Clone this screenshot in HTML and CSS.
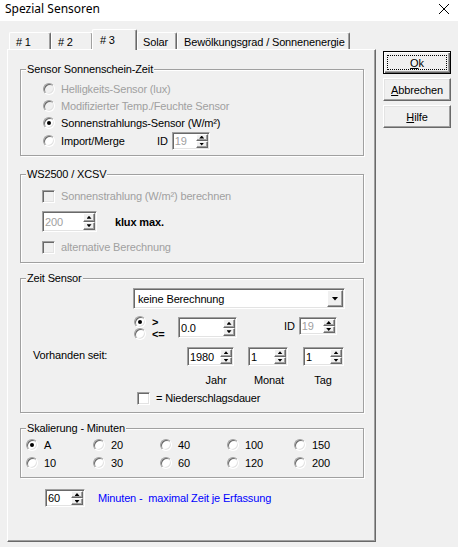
FILE: index.html
```html
<!DOCTYPE html>
<html>
	<head>
		<meta charset="UTF-8">
		<title>Spezial Sensoren</title>
		<link rel="stylesheet" href="styles.css">
	</head>
	<body>
		<div class="titlebar">
			<span class="caption">Spezial Sensoren</span>
			<svg class="close" width="12" height="12" viewBox="0 0 12 12"><path d="M1 1L11 11M11 1L1 11" stroke="#000" stroke-width="1" fill="none"/></svg>
		</div>
		<div class="dialog">
			<div class="tabarea">
				<div class="tabs">
					<div class="tab t1"># 1</div>
					<div class="tab t2"># 2</div>
					<div class="tab active"># 3</div>
					<div class="tab t4">Solar</div>
					<div class="tab t5">Bewölkungsgrad / Sonnenenergie</div>
				</div>
				<div class="panel">
					<!-- Sensor Sonnenschein-Zeit -->
					<div class="group g1">
						<div class="gtitle">Sensor Sonnenschein-Zeit</div>
						<div class="gbody">
							<div class="row off"><span class="radio dis"></span>Helligkeits-Sensor (lux)</div>
							<div class="row off"><span class="radio dis"></span>Modifizierter Temp./Feuchte Sensor</div>
							<div class="row"><span class="radio on"></span>Sonnenstrahlungs-Sensor (W/m²)</div>
							<div class="row r4">
								<span class="radio"></span><span class="lbl-import">Import/Merge</span>
								<span class="idlbl">ID</span>
								<div class="spin s-id1"><span class="val off">19</span><span class="arrows"><i class="up"></i><i class="dn"></i></span></div>
							</div>
						</div>
					</div>
					<!-- WS2500 -->
					<div class="group g2">
						<div class="gtitle">WS2500 / XCSV</div>
						<div class="gbody">
							<div class="row off"><span class="check dis"></span>Sonnenstrahlung (W/m²) berechnen</div>
							<div class="row r-spin">
								<div class="spin s-200"><span class="val off">200</span><span class="arrows"><i class="up"></i><i class="dn"></i></span></div>
								<b class="klux">klux max.</b>
							</div>
							<div class="row off r-alt"><span class="check dis"></span>alternative Berechnung</div>
						</div>
					</div>
					<!-- Zeit Sensor -->
					<div class="group g3">
						<div class="gtitle">Zeit Sensor</div>
						<div class="gbody">
							<div class="combo"><span class="val">keine Berechnung</span><span class="dropbtn"><i></i></span></div>
							<div class="row z-cmp">
								<div class="cmp">
									<div class="cmprow"><span class="radio on"></span><b>&gt;</b></div>
									<div class="cmprow"><span class="radio"></span><b>&lt;=</b></div>
								</div>
								<div class="spin s-val"><span class="val">0.0</span><span class="arrows"><i class="up"></i><i class="dn"></i></span></div>
								<span class="idlbl2">ID</span>
								<div class="spin s-id2"><span class="val off">19</span><span class="arrows"><i class="up"></i><i class="dn"></i></span></div>
							</div>
							<div class="row z-date">
								<span class="since">Vorhanden seit:</span>
								<div class="spin s-year"><span class="val">1980</span><span class="arrows"><i class="up"></i><i class="dn"></i></span></div>
								<div class="spin s-month"><span class="val">1</span><span class="arrows"><i class="up"></i><i class="dn"></i></span></div>
								<div class="spin s-day"><span class="val">1</span><span class="arrows"><i class="up"></i><i class="dn"></i></span></div>
							</div>
							<div class="row z-labels">
								<span class="dl dl-year">Jahr</span>
								<span class="dl dl-month">Monat</span>
								<span class="dl dl-day">Tag</span>
							</div>
							<div class="row z-rain"><span class="check"></span>= Niederschlagsdauer</div>
						</div>
					</div>
					<!-- Skalierung -->
					<div class="group g4">
						<div class="gtitle">Skalierung - Minuten</div>
						<div class="scale">
							<div class="opt"><span class="radio on"></span>A</div>
							<div class="opt"><span class="radio"></span>20</div>
							<div class="opt"><span class="radio"></span>40</div>
							<div class="opt"><span class="radio"></span>100</div>
							<div class="opt"><span class="radio"></span>150</div>
							<div class="opt"><span class="radio"></span>10</div>
							<div class="opt"><span class="radio"></span>30</div>
							<div class="opt"><span class="radio"></span>60</div>
							<div class="opt"><span class="radio"></span>120</div>
							<div class="opt"><span class="radio"></span>200</div>
						</div>
					</div>
					<div class="row maxrow">
						<div class="spin s-60"><span class="val">60</span><span class="arrows"><i class="up"></i><i class="dn"></i></span></div>
						<span class="blue">Minuten -&nbsp; maximal Zeit je Erfassung</span>
					</div>
				</div>
			</div>
			<div class="buttons">
				<div class="btn default"><span class="focus"><u>O</u>k</span></div>
				<div class="btn"><u>A</u>bbrechen</div>
				<div class="btn"><u>H</u>ilfe</div>
			</div>
		</div>
	</body>
</html>
```

FILE: styles.css
```css
body{
	margin: 0;
	width: 458px;
	height: 547px;
	overflow: hidden;
	background: #f0f0f0;
	color: #000;
	font: 11px "Liberation Sans", Arial, sans-serif;
	letter-spacing: -0.15px;
}
.titlebar{
	height: 21px;
	background: #fff;
	display: flex;
	justify-content: space-between;
	align-items: flex-start;
	padding: 0 8px 0 5px;
}
.caption{
	font: 12px/18px "Noto Sans", sans-serif;
	letter-spacing: 0;
}
.close{
	margin-top: 3px;
}
.dialog{
	display: flex;
	padding: 8px 0 0 7px;
}
.tabarea{
	width: 369px;
}

/* tabs */
.tabs{
	display: flex;
	align-items: flex-end;
	height: 20px;
	padding-left: 2px;
}
.tab{
	box-sizing: border-box;
	height: 17px;
	border: 1px solid;
	border-bottom: 0;
	border-color: #fff #696969 #fff #fff;
	border-radius: 2px 2px 0 0;
	box-shadow: inset -1px 0 #a0a0a0;
	padding: 3px 0 0 6px;
	line-height: 13px;
	white-space: nowrap;
}
.t1{ width: 42px; }
.t2{ width: 42px; }
.t4{ width: 40px; padding-left: 5px; }
.t5{ width: 173px; }
.tab.active{
	width: 45px;
	height: 21px;
	margin: 0 0 -1px -1px;
	padding: 4px 0 0 7px;
	position: relative;
	z-index: 1;
	background: #f0f0f0;
}
.panel{
	box-sizing: border-box;
	height: 493px;
	border: 1px solid;
	border-color: #fff #696969 #696969 #fff;
	box-shadow: inset -1px -1px #a0a0a0;
	padding-left: 12px;
}

/* group boxes */
.group{
	box-sizing: border-box;
	width: 344px;
	border: 1px solid #a0a0a0;
	box-shadow: inset 1px 1px #fff, 1px 1px #fff;
}
.gtitle{
	display: table;
	margin: -7px 0 0 5px;
	padding: 0 1px;
	line-height: 13px;
	background: #f0f0f0;
}
.row{
	display: flex;
	align-items: center;
	height: 17px;
	white-space: nowrap;
}
.off{
	color: #a0a0a0;
}
.g1{ margin-top: 19px; }
.g1 .gbody{ padding: 4px 0 5px 22px; }
.g1 .r4{ height: 19px; }
.lbl-import{ width: 96px; }
.idlbl{ margin-right: 4px; }

.g2{ margin-top: 18px; }
.g2 .gbody{ padding: 7px 0 7px 21px; }
.g2 .row{ height: 16px; }
.g2 .r-spin{ height: 21px; margin-top: 7px; }
.g2 .r-alt{ margin-top: 7px; }
.klux{ margin-left: 18px; }

.g3{ margin-top: 15px; }
.g3 .gbody{ padding: 3px 0 6px 0; }
.z-cmp{
	height: 21px;
	margin-top: 8px;
	align-items: flex-start;
}
.cmp{
	margin: -1px 0 0 113px;
	width: 44px;
}
.cmprow{
	display: flex;
	align-items: center;
	height: 12px;
}
.idlbl2{
	margin: 3px 4px 0 47px;
}
.z-date{
	height: 20px;
	margin-top: 9px;
	align-items: flex-start;
}
.since{
	width: 154px;
	padding-left: 12px;
	line-height: 17px;
}
.s-month{ margin-left: 14px; }
.s-day{ margin-left: 15px; }
.z-labels{
	height: 14px;
	margin-top: 6px;
	padding-left: 175px;
}
.dl{
	width: 40px;
	text-align: center;
}
.dl-month{ margin-left: 13px; }
.dl-day{ margin-left: 14px; }
.z-rain{
	height: 16px;
	margin-top: 3px;
	padding-left: 116px;
}

.g4{ margin-top: 15px; }
.scale{
	display: grid;
	grid-template-columns: repeat(5, 67px);
	grid-auto-rows: 18px;
	padding: 1px 0 5px 5px;
}
.opt{
	display: flex;
	align-items: center;
}
.maxrow{
	height: 18px;
	margin: 11px 0 0 25px;
}
.blue{
	color: #0000ff;
	margin-left: 13px;
}

/* controls */
.radio,
.check{
	box-sizing: border-box;
	flex: none;
	width: 12px;
	height: 12px;
	margin-right: 6px;
	border: 1px solid;
	border-color: #a0a0a0 #fff #fff #a0a0a0;
	box-shadow: inset 1px 1px #696969, inset -1px -1px #e3e3e3;
	background: #fff;
	display: flex;
	align-items: center;
	justify-content: center;
}
.radio{
	border-radius: 50%;
}
.check{
	width: 13px;
	height: 13px;
	margin-right: 6px;
}
.radio.dis,
.check.dis{
	background: #f0f0f0;
}
.radio.on::after{
	content: "";
	width: 4px;
	height: 4px;
	border-radius: 50%;
	background: #000;
}
.spin,
.combo{
	box-sizing: border-box;
	display: flex;
	background: #fff;
	border: 1px solid;
	border-color: #a0a0a0 #fff #fff #a0a0a0;
	box-shadow: inset 1px 1px #696969, inset -1px -1px #e3e3e3;
	padding: 1px;
}
.spin .val,
.combo .val{
	flex: 1;
	display: flex;
	align-items: center;
	padding-left: 1px;
}
.arrows{
	width: 12px;
	display: flex;
	flex-direction: column;
}
.arrows i,
.dropbtn{
	flex: 1;
	box-sizing: border-box;
	background: #f0f0f0;
	border: 1px solid;
	border-color: #fff #696969 #696969 #fff;
	box-shadow: inset -1px -1px #a0a0a0;
	display: flex;
	align-items: center;
	justify-content: center;
}
.arrows i::after{
	content: "";
	width: 5px;
	height: 3px;
	background: #000;
}
.arrows .up::after{
	clip-path: polygon(50% 0, 100% 100%, 0 100%);
}
.arrows .dn::after{
	clip-path: polygon(0 0, 100% 0, 50% 100%);
}
.s-id1{ width: 38px; height: 18px; }
.s-200{ width: 55px; height: 21px; }
.s-val{ width: 59px; height: 21px; }
.s-id2{ width: 38px; height: 18px; }
.s-year{ width: 47px; height: 19px; }
.s-month{ width: 40px; height: 19px; }
.s-day{ width: 41px; height: 19px; }
.s-60{ width: 40px; height: 18px; }
.combo{
	width: 212px;
	height: 21px;
	margin-left: 112px;
}
.combo .val{
	padding-left: 3px;
}
.dropbtn{
	flex: none;
	width: 16px;
}
.dropbtn i{
	width: 7px;
	height: 4px;
	background: #000;
	clip-path: polygon(0 0, 100% 0, 50% 100%);
}

/* buttons */
.buttons{
	display: flex;
	flex-direction: column;
	gap: 4px;
	margin-left: 7px;
	padding-top: 22px;
}
.btn{
	box-sizing: border-box;
	width: 68px;
	height: 23px;
	border: 1px solid;
	border-color: #fff #696969 #696969 #fff;
	box-shadow: inset -1px -1px #a0a0a0, inset 1px 1px #e3e3e3;
	display: flex;
	align-items: center;
	justify-content: center;
}
.btn.default{
	border: 1px solid #000;
	box-shadow: inset 1px 1px #fff, inset -1px -1px #696969, inset -2px -2px #a0a0a0;
	padding: 3px;
}
.focus{
	flex: 1;
	align-self: stretch;
	border: 1px dotted #000;
	display: flex;
	align-items: center;
	justify-content: center;
}
```
